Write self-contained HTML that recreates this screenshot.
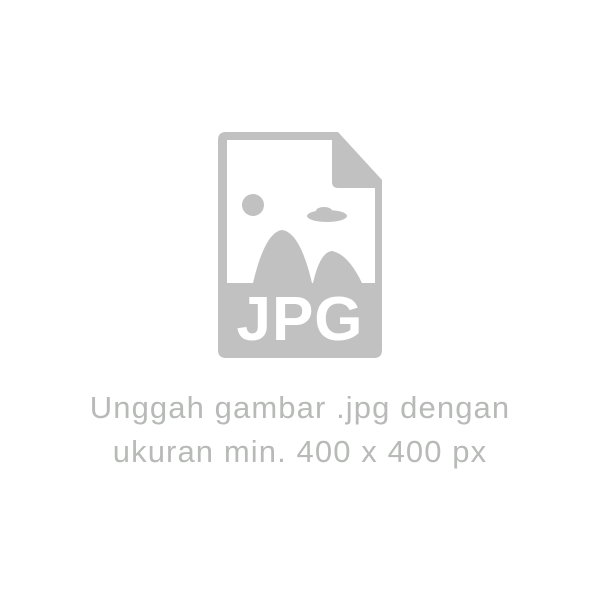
<!DOCTYPE html>
<html><head><style>
html,body{margin:0;padding:0;background:#fff;width:600px;height:600px;overflow:hidden}
.t{position:absolute;left:0;width:600px;text-align:center;font-family:"Liberation Sans",sans-serif;font-size:31px;color:#b7bab7;line-height:44px;letter-spacing:1.1px}
</style></head><body>
<svg width="600" height="600" style="position:absolute;left:0;top:0">
<path d="M226 132 H338 L382 180 V350 Q382 358 374 358 H226 Q218 358 218 350 V140 Q218 132 226 132 Z" fill="#c1c1c1"/>
<path d="M227 140 H332 V182 Q332 188 338 188 H375 V283 H227 Z" fill="#fff"/>
<circle cx="253" cy="205" r="11" fill="#c1c1c1"/>
<ellipse cx="327" cy="216" rx="20" ry="6" fill="#c1c1c1"/>
<ellipse cx="324" cy="211" rx="8" ry="4" fill="#c1c1c1"/>
<path d="M253 283 Q265 232 282 230 Q300 232 312 283 Z" fill="#c1c1c1"/>
<path d="M313 283 Q320 252 332 251 Q348 254 362 283 Z" fill="#c1c1c1"/>
<text x="300" y="340" text-anchor="middle" font-family="Liberation Sans,sans-serif" font-weight="bold" font-size="62" fill="#fff" letter-spacing="1">JPG</text>
</svg>
<div class="t" style="top:386px">Unggah gambar .jpg dengan<br>ukuran min. 400 x 400 px</div>
</body></html>
